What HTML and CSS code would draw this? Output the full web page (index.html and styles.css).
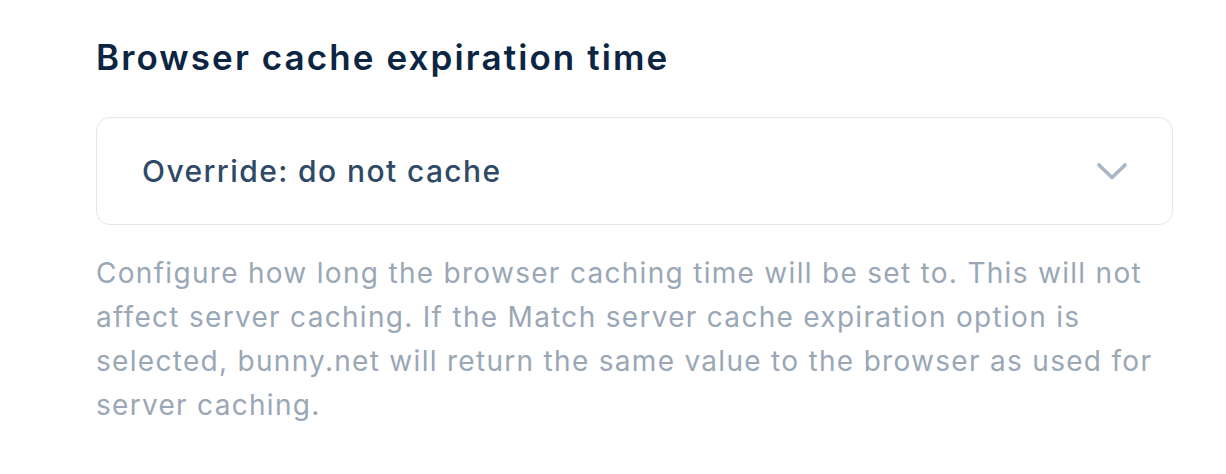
FILE: index.html
```html
<!DOCTYPE html>
<html>
<head>
<meta charset="utf-8">
<link rel="stylesheet" href="styles.css">
</head>
<body>
<div class="field">
  <h2 class="label">Browser cache expiration time</h2>
  <div class="select">
    <span class="value">Override: do not cache</span>
    <svg class="chevron" width="30" height="17" viewBox="0 0 30 17"><path d="M2 2 L15 14.5 L28 2" fill="none" stroke="#a9b5c3" stroke-width="3.6" stroke-linecap="round" stroke-linejoin="round"/></svg>
  </div>
  <p class="help">Configure how long the browser caching time will be set to. This will not affect server caching. If the Match server cache expiration option is selected, bunny.net will return the same value to the browser as used for server caching.</p>
</div>
</body>
</html>
```
FILE: styles.css
```css
html, body {
  margin: 0;
  padding: 0;
  background: #ffffff;
}
body {
  font-family: Inter, "Noto Sans", sans-serif;
}
.field {
  width: 1077px;
  padding: 35px 0 0 96px;
}
.label {
  margin: 0;
  font-size: 35px;
  font-weight: 600;
  line-height: 44px;
  color: #0b2542;
  letter-spacing: 2.1px;
}
.select {
  margin-top: 38px;
  height: 106px;
  border: 1px solid #e3e7ec;
  border-radius: 14px;
  display: flex;
  align-items: center;
  justify-content: space-between;
  padding: 0 45px 0 45px;
}
.value {
  font-size: 30px;
  font-weight: 500;
  color: #2f4a66;
  letter-spacing: 1.4px;
}
.chevron {
  display: block;
}
.help {
  margin: 26px 0 0 0;
  font-size: 28px;
  line-height: 44px;
  color: #9aa7b6;
  letter-spacing: 1.3px;
}
```
